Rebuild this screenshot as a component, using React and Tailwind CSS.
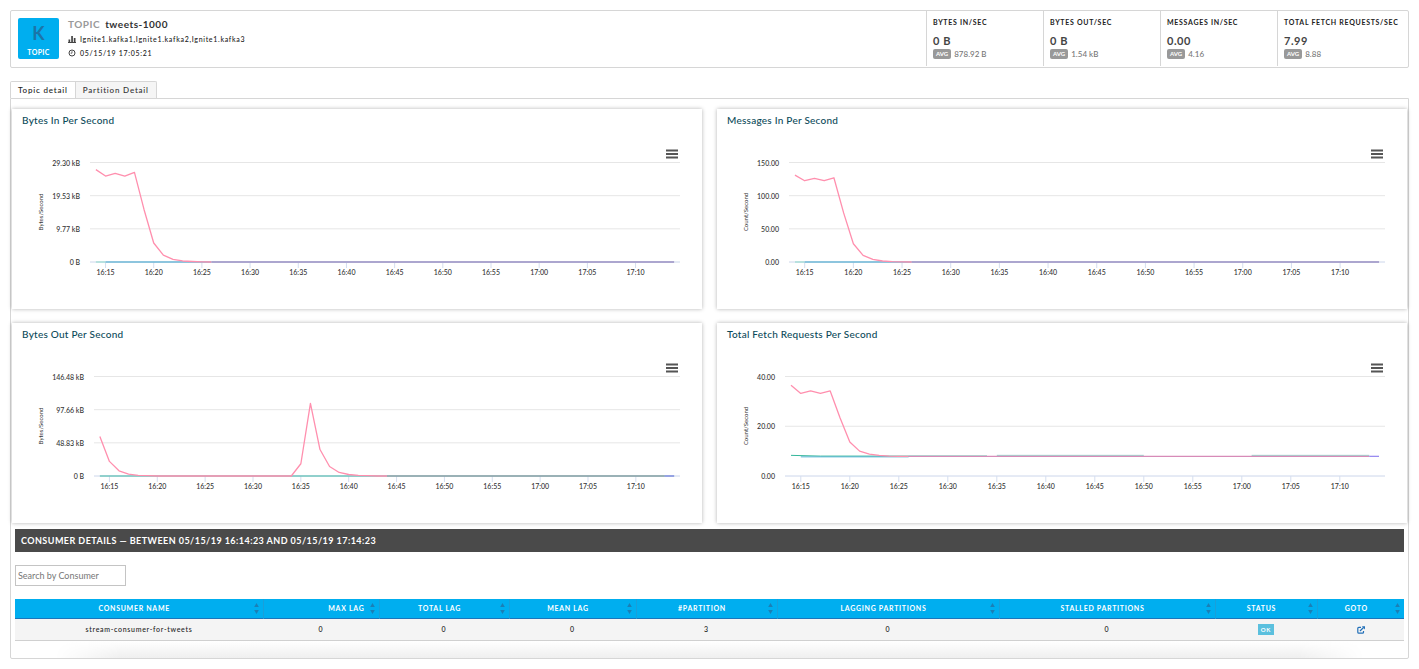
import { useState } from "react";

const stats = [
  { label: "BYTES IN/SEC", value: "0 B", avg: "878.92 B" },
  { label: "BYTES OUT/SEC", value: "0 B", avg: "1.54 kB" },
  { label: "MESSAGES IN/SEC", value: "0.00", avg: "4.16" },
  { label: "TOTAL FETCH REQUESTS/SEC", value: "7.99", avg: "8.88" },
];

const times = [
  "16:15", "16:20", "16:25", "16:30", "16:35", "16:40",
  "16:45", "16:50", "16:55", "17:00", "17:05", "17:10",
];

// One value per minute, starting at 16:14
const charts = [
  {
    title: "Bytes In Per Second",
    unit: "Bytes/Second",
    labels: ["29.30 kB", "19.53 kB", "9.77 kB", "0 B"],
    left: 78,
    max: 29.3,
    base: "zero",
    values: [27.2, 25.3, 26.1, 25.3, 26.4, 15.4, 5.6, 2, 0.75, 0.3, 0.15, 0.05, 0],
  },
  {
    title: "Messages In Per Second",
    unit: "Count/Second",
    labels: ["150.00", "100.00", "50.00", "0.00"],
    left: 72,
    max: 150,
    base: "zero",
    values: [131, 122.5, 126, 122.5, 127, 74, 27.5, 10, 4, 1.5, 0.6, 0.2, 0],
  },
  {
    title: "Bytes Out Per Second",
    unit: "Bytes/Second",
    labels: ["146.48 kB", "97.66 kB", "48.83 kB", "0 B"],
    left: 82,
    max: 146.48,
    base: "flat",
    values: [
      58, 21.5, 7.7, 2.7, 1, 0.5, 0, 0, 0, 0, 0, 0, 0, 0, 0, 0, 0, 0, 0, 0, 0,
      18, 107, 39, 14, 5.2, 2.2, 1, 0.5, 0, 0,
    ],
  },
  {
    title: "Total Fetch Requests Per Second",
    unit: "Count/Second",
    labels: ["40.00", "20.00", "0.00"],
    left: 68,
    max: 40,
    base: "fetch",
    values: [36.5, 33.2, 34.2, 33.2, 34.2, 23.4, 13.7, 10, 8.8, 8.3, 8, 7.9, 7.9],
  },
];

const columns = [
  { name: "CONSUMER NAME", width: "w-[248px]", align: "text-center" },
  { name: "MAX LAG", width: "w-[116px]", align: "text-right pr-[5px]" },
  { name: "TOTAL LAG", width: "w-[130px]", align: "text-center" },
  { name: "MEAN LAG", width: "w-[127px]", align: "text-center" },
  { name: "#PARTITION", width: "w-[141px]", align: "text-center" },
  { name: "LAGGING PARTITIONS", width: "w-[222px]", align: "text-center" },
  { name: "STALLED PARTITIONS", width: "w-[216px]", align: "text-center" },
  { name: "STATUS", width: "w-[102px]", align: "text-center" },
  { name: "GOTO", width: "w-[87px]", align: "text-center" },
];

const consumers = [
  { name: "stream-consumer-for-tweets", maxLag: 0, totalLag: 0, meanLag: 0, partitions: 3, lagging: 0, stalled: 0, status: "OK" },
];

const RIGHT = 668;
const TOP = 29.5;
const BOTTOM = 129;

function LineChart({ chart }) {
  const { left, max, labels, values, base, unit } = chart;
  const width = RIGHT - left;
  const step = (width * 0.98) / 60;
  const px = minute => left + width * 0.01 + minute * step;
  const py = value => BOTTOM - (value / max) * (BOTTOM - TOP);
  const points = values.map((v, i) => `${px(i)},${py(v)}`).join(" ");
  const tail = values[values.length - 1];

  return (
    <svg viewBox="0 0 690 176" className="block w-full" role="img" aria-label={chart.title}>
      {labels.map((label, i) => {
        const y = TOP + ((BOTTOM - TOP) * i) / (labels.length - 1);
        const last = i === labels.length - 1;
        return (
          <g key={label}>
            <line x1={left} x2={RIGHT} y1={y} y2={y} stroke={last ? "#ccd6eb" : "#e6e6e6"} />
            <text x={left - 10} y={y + 3} textAnchor="end" fill="#333" className="text-[7px] font-medium">
              {label}
            </text>
          </g>
        );
      })}

      {times.map((time, i) => (
        <g key={time}>
          <line x1={px(1 + i * 5)} x2={px(1 + i * 5)} y1={BOTTOM} y2={BOTTOM + 6} stroke="#d5deef" />
          <text x={px(1 + i * 5)} y={BOTTOM + 13} textAnchor="middle" fill="#333" className="text-[7px] font-medium">
            {time}
          </text>
        </g>
      ))}

      <text transform="translate(31 79) rotate(-90)" textAnchor="middle" fill="#333" className="text-[6px]">
        {unit}
      </text>

      {/* Idle brokers */}
      {base === "zero" && (
        <g strokeWidth="1.3">
          <line x1={px(0)} x2={px(1)} y1={BOTTOM} y2={BOTTOM} stroke="#9fdcd2" />
          <line x1={px(1)} x2={px(12)} y1={BOTTOM} y2={BOTTOM} stroke="#6fb9d6" />
        </g>
      )}
      {base === "flat" && (
        <line x1={px(0)} x2={px(60)} y1={BOTTOM} y2={BOTTOM} stroke="#3db5a4" />
      )}
      {base === "fetch" && (
        <g>
          <polyline points={`${px(0)},${py(8.3)} ${px(3)},${py(8)} ${px(20)},${py(8)}`} fill="none" stroke="#35b79b" />
          <line x1={px(1)} x2={px(12)} y1={py(7.7)} y2={py(7.7)} stroke="#55b5d0" />
          <line x1={px(21)} x2={px(36)} y1={py(8.3)} y2={py(8.3)} stroke="#8fd3c8" />
          <line x1={px(47)} x2={px(59)} y1={py(8.3)} y2={py(8.3)} stroke="#8fd3c8" />
        </g>
      )}

      <polyline points={points} fill="none" stroke="#ff8fae" strokeWidth="1.3" strokeLinejoin="round" />
      {base === "zero" && <line x1={px(12)} x2={px(60)} y1={BOTTOM} y2={BOTTOM} stroke="#aca6cf" strokeWidth="2" />}
      {base === "flat" && <line x1={px(30)} x2={px(59)} y1={BOTTOM} y2={BOTTOM} stroke="#a3929f" />}
      {base === "fetch" && <line x1={px(12)} x2={px(59)} y1={py(tail)} y2={py(tail)} stroke="#d78bb8" strokeWidth="1.3" />}
      {base !== "zero" && <line x1={px(59)} x2={px(60)} y1={py(tail)} y2={py(tail)} stroke="#9a8cf0" strokeWidth="1.3" />}
    </svg>
  );
}

function ChartCard({ chart }) {
  return (
    <section className="relative bg-white shadow-[0_0_4px_rgba(0,0,0,0.3)]">
      <h2 className="px-[10px] pb-[2px] text-[10px] leading-[22px] font-medium tracking-wide text-[#0b4a59]">
        {chart.title}
      </h2>
      <LineChart chart={chart} />
      <button aria-label="Chart menu" className="absolute top-[40px] right-[24px]">
        <svg width="12" height="10" viewBox="0 0 12 10" stroke="#555" strokeWidth="2">
          <path d="M0 1.5h12M0 5h12M0 8.5h12" />
        </svg>
      </button>
    </section>
  );
}

function SortIcon() {
  return (
    <svg width="5" height="11" viewBox="0 0 5 11" fill="#1b7fb5">
      <path d="M2.5 0 4.8 4H.2zM2.5 11 .2 7h4.6z" />
    </svg>
  );
}

function TopicHeader() {
  return (
    <header className="flex justify-between rounded-xs border border-[#d6d6d6]">
      <div className="flex items-start gap-[9px] p-[7px]">
        <div className="flex h-[41px] w-[41px] flex-col items-center justify-between rounded-xs bg-[#00aeef] pt-[4px] pb-[2px]">
          <span className="text-[18px] leading-[22px] font-bold text-[#1b75a9]">K</span>
          <span className="text-[7px] leading-[10px] font-bold tracking-wider text-white">TOPIC</span>
        </div>
        <div className="text-[7px] leading-[14px] font-medium tracking-widest text-[#222]">
          <h1 className="flex gap-[5px] text-[10px] leading-[12px] font-bold tracking-wider text-[#333]">
            <span className="text-[#999]">TOPIC</span>
            <span>tweets-1000</span>
          </h1>
          <p className="flex items-center gap-[4px] pt-[2px]">
            <svg width="8" height="8" viewBox="0 0 8 8" fill="#444">
              <path d="M0 7h8v1H0zM.5 4.5h1.7V7H.5zM3.2 1h1.7v6H3.2zM5.8 3h1.7v4H5.8z" />
            </svg>
            Ignite1.kafka1,Ignite1.kafka2,Ignite1.kafka3
          </p>
          <p className="flex items-center gap-[4px]">
            <svg width="8" height="8" viewBox="0 0 8 8" fill="none" stroke="#444">
              <circle cx="4" cy="4" r="3" />
              <path d="M4 2.2V4.2H2.6" strokeWidth=".8" />
            </svg>
            05/15/19 17:05:21
          </p>
        </div>
      </div>

      <dl className="flex pb-[1px]">
        {stats.map(stat => (
          <div key={stat.label} className="min-w-[117px] border-l border-[#d6d6d6] px-[6px] pt-[6px] last:min-w-[131px]">
            <dt className="text-[7px] leading-[11px] font-bold tracking-widest text-[#222]">{stat.label}</dt>
            <dd className="pt-[6px] text-[11px] leading-[14px] font-bold tracking-wider text-[#444]">{stat.value}</dd>
            <dd className="flex items-center gap-[3px] text-[8px] leading-[12px] font-medium text-[#777]">
              <span className="rounded-xs bg-[#999] px-[3px] text-[6px] leading-[10px] font-bold text-white">AVG</span>
              {stat.avg}
            </dd>
          </div>
        ))}
      </dl>
    </header>
  );
}

export default function App() {
  const [tab, setTab] = useState("Topic detail");
  const [search, setSearch] = useState("");

  const filtered = consumers.filter(c => c.name.includes(search.toLowerCase()));

  return (
    <main className="bg-white p-[10px] font-['Lato',sans-serif]">
      <TopicHeader />

      {/* Tabs */}
      <div className="mt-[13px] flex" role="tablist">
        {["Topic detail", "Partition Detail"].map((name, i) => (
          <button
            key={name}
            role="tab"
            aria-selected={tab === name}
            onClick={() => setTab(name)}
            className={`border-t border-r border-[#d6d6d6] px-[7px] pt-[1px] text-[8px] leading-[15px] font-medium tracking-widest ${
              i === 0 ? "rounded-tl-xs border-l" : "rounded-tr-xs"
            } ${tab === name ? "bg-white text-[#222]" : "bg-[#f5f5f5] text-[#333]"}`}
          >
            {name}
          </button>
        ))}
      </div>

      <div className="rounded-b-xs border border-[#d6d6d6]">
        <div className="grid grid-cols-2 gap-x-[15px] gap-y-[14px] px-[1px] pt-[10px]">
          {charts.map(chart => (
            <ChartCard key={chart.title} chart={chart} />
          ))}
        </div>

        <div className="px-[4px] pt-[6px]">
          <h2 className="bg-[#4a4a4a] px-[6px] text-[9px] leading-[23px] font-bold tracking-wider text-white">
            CONSUMER DETAILS — BETWEEN 05/15/19 16:14:23 AND 05/15/19 17:14:23
          </h2>
          <input
            type="text"
            aria-label="Search by Consumer"
            placeholder="Search by Consumer"
            value={search}
            onChange={e => setSearch(e.target.value)}
            className="my-[13px] block h-[21px] w-[111px] border border-[#c4c4c4] px-[2px] text-[9px] placeholder:text-[#777]"
          />
          <table className="w-full table-fixed border-collapse text-[7px] tracking-widest">
            <thead>
              <tr className="border-b border-[#1b75bb] bg-[#00aeef] text-white">
                {columns.map(col => (
                  <th key={col.name} className={`border-r border-[#1a9fd9] p-0 pr-[4px] font-bold last:border-r-0 ${col.width}`}>
                    <button className="flex h-[19px] w-full items-center">
                      <span className={`flex-1 ${col.align}`}>{col.name}</span>
                      <SortIcon />
                    </button>
                  </th>
                ))}
              </tr>
            </thead>
            <tbody>
              {filtered.map(c => (
                <tr key={c.name} className="h-[22px] border-b border-[#d0d0d0] bg-[#f4f4f4] text-center font-medium text-[#222]">
                  <td>{c.name}</td>
                  <td>{c.maxLag}</td>
                  <td>{c.totalLag}</td>
                  <td>{c.meanLag}</td>
                  <td>{c.partitions}</td>
                  <td>{c.lagging}</td>
                  <td>{c.stalled}</td>
                  <td>
                    <span className="inline-block bg-[#5bc0de] px-[3px] align-middle text-[6px] leading-[11px] font-bold text-white">
                      {c.status}
                    </span>
                  </td>
                  <td>
                    <a href="#consumer" aria-label="Open consumer" className="inline-block align-middle">
                      <svg width="8" height="8" viewBox="0 0 8 8" fill="none" stroke="#2370b8" strokeWidth="1.2">
                        <path d="M4 1.3H1.8a1 1 0 0 0-1 1v3.9a1 1 0 0 0 1 1h3.7a1 1 0 0 0 1-1V5" />
                        <path d="M3 5 6.5 1.5" />
                        <path d="M4.8.2H8v3.2z" fill="#2370b8" stroke="none" />
                      </svg>
                    </a>
                  </td>
                </tr>
              ))}
            </tbody>
          </table>
        </div>
        <div className="mx-[44px] h-[17px] bg-linear-to-b from-white to-[#efefef] mask-x-from-95%" />
      </div>
    </main>
  );
}
